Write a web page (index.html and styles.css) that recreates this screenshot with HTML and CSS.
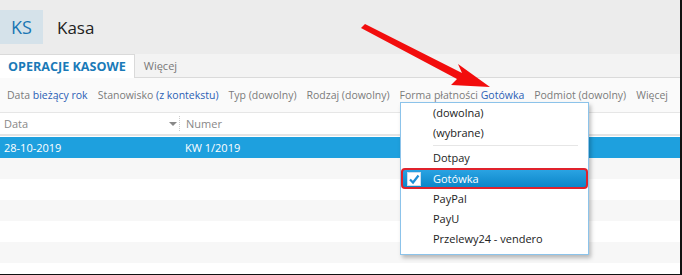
FILE: index.html
```html
<!DOCTYPE html>
<html lang="pl">
<head>
    <meta charset="UTF-8">
    <title>Kasa</title>
    <link rel="stylesheet" href="styles.css">
</head>
<body>
    <div class="app">
        <div class="header">
            <div class="badge">KS</div>
            <div class="title">Kasa</div>
        </div>

        <div class="tabs">
            <div class="tab active">OPERACJE KASOWE</div>
            <div class="tab">Więcej</div>
        </div>

        <div class="filters">
            <span>Data <b>bieżący rok</b></span>
            <span>Stanowisko <b>(z kontekstu)</b></span>
            <span>Typ (dowolny)</span>
            <span>Rodzaj (dowolny)</span>
            <span>Forma płatności <b>Gotówka</b></span>
            <span>Podmiot (dowolny)</span>
            <span>Więcej</span>
        </div>

        <div class="grid">
            <div class="grid-head">
                <div class="col col-date">Data <span class="sort"></span></div>
                <div class="col col-num">Numer</div>
            </div>
            <div class="row selected">
                <div class="col col-date">28-10-2019</div>
                <div class="col col-num">KW 1/2019</div>
            </div>
            <div class="row alt"></div>
            <div class="row"></div>
            <div class="row alt"></div>
            <div class="row"></div>
            <div class="row alt"></div>
            <div class="row"></div>
        </div>

        <div class="dropdown">
            <div class="item">(dowolna)</div>
            <div class="item">(wybrane)</div>
            <div class="sep"></div>
            <div class="item">Dotpay</div>
            <div class="item checked">
                <span class="check">
                    <svg width="12" height="12" viewBox="0 0 12 12">
                        <path d="M2 6.5 L5 9.5 L10.5 2.5" fill="none" stroke="#1e8fd6" stroke-width="2.2"/>
                    </svg>
                </span>
                Gotówka
            </div>
            <div class="item">PayPal</div>
            <div class="item">PayU</div>
            <div class="item">Przelewy24 - vendero</div>
        </div>

        <!-- annotation arrow -->
        <svg class="arrow" width="140" height="70" viewBox="0 0 140 70">
            <path d="M0 5 L4 1 L101 50 L97 41 L129 64 L90 62 L96 56 Z" fill="#f20d0d"/>
        </svg>
    </div>
</body>
</html>
```

FILE: styles.css
```css
body {
    margin: 0;
    font-family: "Open Sans", "Noto Sans", sans-serif;
    background: #fff;
}

.app {
    position: relative;
    width: 680px;
    height: 274px;
    overflow: hidden;
    border-right: 2px solid #111;
    border-bottom: 1px solid #111;
}

.header {
    height: 54px;
    background: #ececec;
    display: flex;
    align-items: center;
}

.badge {
    width: 43px;
    height: 34px;
    background: #d5e2ea;
    color: #1a76b4;
    font-size: 18px;
    display: flex;
    align-items: center;
    justify-content: center;
}

.title {
    margin-left: 14px;
    font-size: 17px;
    color: #222;
}

.tabs {
    height: 24px;
    background: #f3f3f3;
    border-bottom: 1px solid #dadada;
    display: flex;
    box-sizing: border-box;
}

.tab {
    padding: 0 9px;
    font-size: 11px;
    color: #777;
    line-height: 24px;
}

.tab.active {
    background: #fff;
    color: #1a7ab8;
    font-weight: bold;
    font-size: 12.6px;
    padding: 0 8px 0 8px;
    border-right: 1px solid #dadada;
    border-top: 1px solid #dadada;
    height: 24px;
    line-height: 23px;
    box-sizing: border-box;
}

.filters {
    height: 34px;
    background: #fafafa;
    display: flex;
    align-items: center;
    gap: 10px;
    padding-left: 7px;
    font-size: 10.5px;
    color: #7a7a7a;
    white-space: nowrap;
}

.filters b {
    font-weight: normal;
    color: #2b5fb5;
}

.grid-head {
    height: 21px;
    display: flex;
    align-items: center;
    font-size: 11px;
    color: #888;
    border-top: 1px solid #e6e6e6;
    border-bottom: 2px solid #e4e4e4;
}

.col-date {
    width: 175px;
    padding-left: 4px;
    position: relative;
}

.col-num {
    padding-left: 6px;
}

.grid-head .col-num {
    border-left: 1px dotted #ccc;
}

.sort {
    position: absolute;
    right: 2px;
    top: 6px;
    border-left: 4px solid transparent;
    border-right: 4px solid transparent;
    border-top: 4px solid #888;
}

.row {
    height: 21px;
    display: flex;
    align-items: center;
    font-size: 11px;
}

.row.selected {
    background: #1ea0de;
    color: #fff;
    border-top: 1px solid #fff;
}

.row.alt {
    background: #f7f7f7;
}

.dropdown {
    position: absolute;
    left: 400px;
    top: 102px;
    width: 189px;
    height: 153px;
    background: #fff;
    border: 1px solid #8cc3ea;
    box-shadow: 2px 3px 4px rgba(0, 0, 0, 0.25);
    box-sizing: border-box;
}

.item {
    height: 20px;
    line-height: 20px;
    padding-left: 32px;
    font-size: 11px;
    color: #222;
    position: relative;
}

.sep {
    height: 1px;
    background: #e6e6e6;
    margin: 2px 10px 2px 32px;
}

.item.checked {
    height: 21px;
    background: linear-gradient(#2aa3e2, #0b86c9);
    color: #fff;
    border: 2px solid #e0222c;
    border-radius: 4px;
    padding-left: 30px;
    box-sizing: border-box;
    line-height: 17px;
}

.check {
    position: absolute;
    left: 4px;
    top: 2px;
    width: 12px;
    height: 12px;
    background: #fff;
    border: 1px solid #cde;
}

.check svg {
    display: block;
}

.arrow {
    position: absolute;
    left: 361px;
    top: 23px;
}
```
